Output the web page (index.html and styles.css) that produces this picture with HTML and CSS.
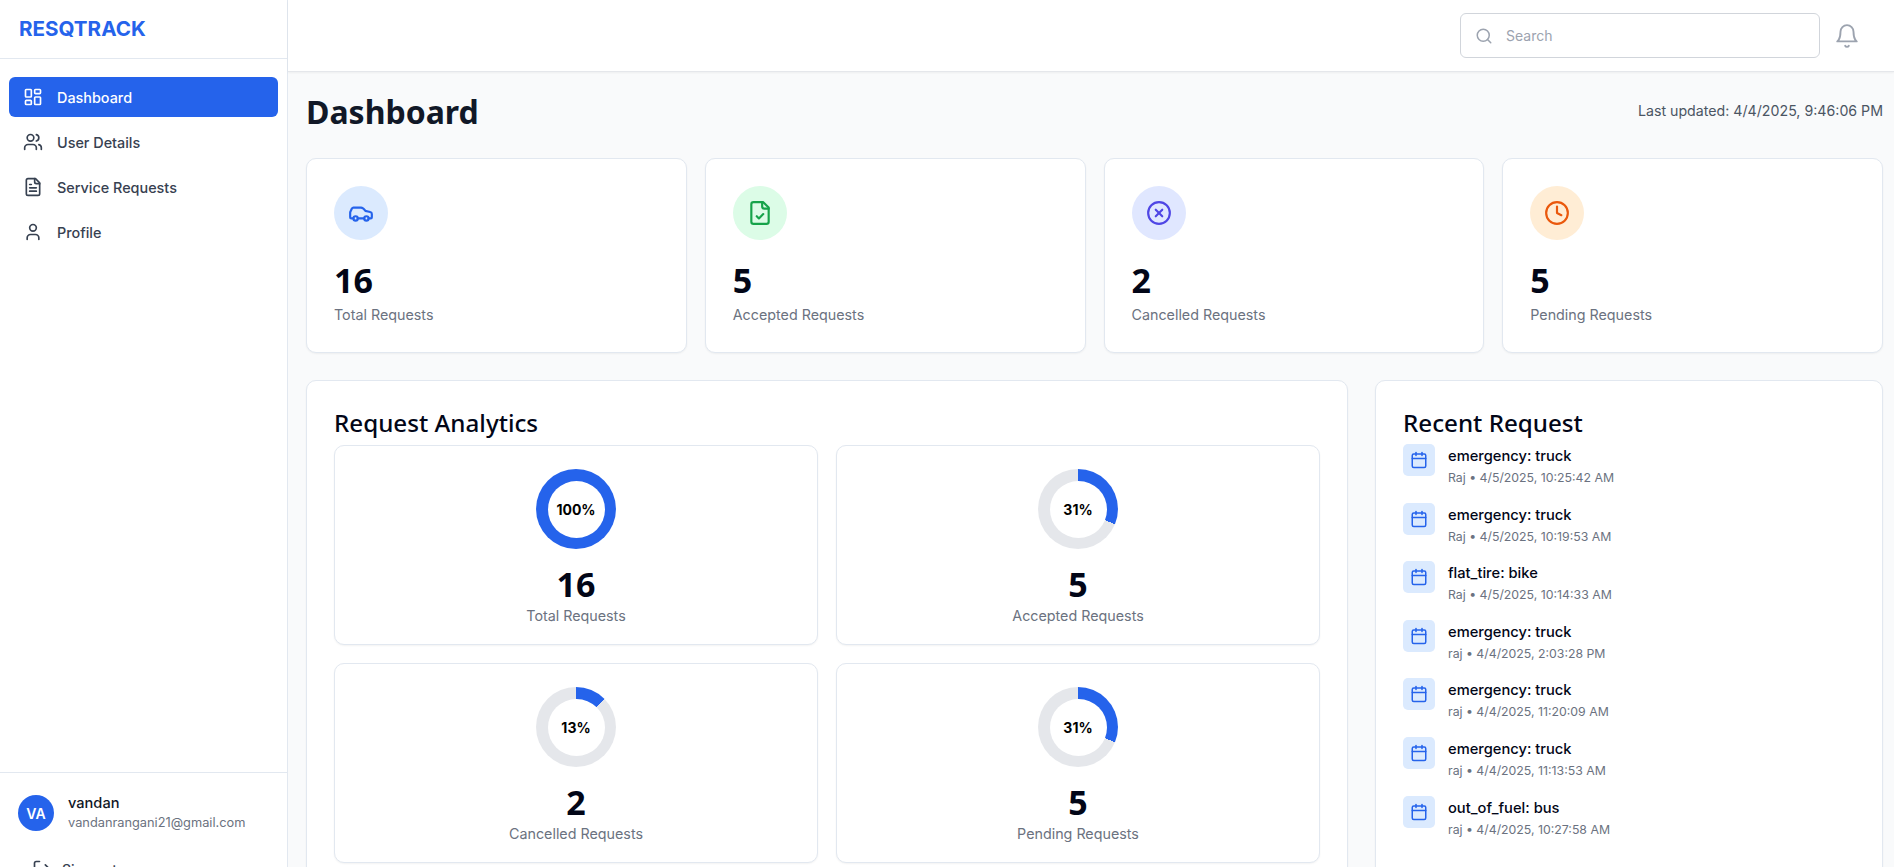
FILE: index.html
```html
<!DOCTYPE html>
<html lang="en">
<head>
    <meta charset="UTF-8">
    <meta name="viewport" content="width=device-width, initial-scale=1.0">
    <title>ResQTrack Dashboard</title>
    <link rel="stylesheet" href="styles.css">
</head>
<body>
    <!-- Icon set -->
    <svg class="icon-defs" aria-hidden="true">
        <symbol id="i-dashboard" viewBox="0 0 24 24"><rect x="3" y="3" width="7" height="9" rx="1"/><rect x="14" y="3" width="7" height="5" rx="1"/><rect x="14" y="12" width="7" height="9" rx="1"/><rect x="3" y="16" width="7" height="5" rx="1"/></symbol>
        <symbol id="i-users" viewBox="0 0 24 24"><path d="M16 21v-2a4 4 0 0 0-4-4H6a4 4 0 0 0-4 4v2"/><circle cx="9" cy="7" r="4"/><path d="M22 21v-2a4 4 0 0 0-3-3.87"/><path d="M16 3.13a4 4 0 0 1 0 7.75"/></symbol>
        <symbol id="i-file" viewBox="0 0 24 24"><path d="M15 2H6a2 2 0 0 0-2 2v16a2 2 0 0 0 2 2h12a2 2 0 0 0 2-2V7Z"/><path d="M14 2v4a2 2 0 0 0 2 2h4"/><path d="M10 9H8"/><path d="M16 13H8"/><path d="M16 17H8"/></symbol>
        <symbol id="i-user" viewBox="0 0 24 24"><path d="M19 21v-2a4 4 0 0 0-4-4H9a4 4 0 0 0-4 4v2"/><circle cx="12" cy="7" r="4"/></symbol>
        <symbol id="i-logout" viewBox="0 0 24 24"><path d="M9 21H5a2 2 0 0 1-2-2V5a2 2 0 0 1 2-2h4"/><path d="M16 17l5-5-5-5"/><path d="M21 12H9"/></symbol>
        <symbol id="i-search" viewBox="0 0 24 24"><circle cx="11" cy="11" r="8"/><path d="m21 21-4.3-4.3"/></symbol>
        <symbol id="i-bell" viewBox="0 0 24 24"><path d="M6 8a6 6 0 0 1 12 0c0 7 3 9 3 9H3s3-2 3-9"/><path d="M10.3 21a1.94 1.94 0 0 0 3.4 0"/></symbol>
        <symbol id="i-car" viewBox="0 0 24 24"><path d="M19 17h2c.6 0 1-.4 1-1v-3c0-.9-.7-1.7-1.5-1.9C18.7 10.6 16 10 16 10s-1.3-1.4-2.2-2.3c-.5-.4-1.1-.7-1.8-.7H5c-.6 0-1.1.4-1.4.9l-1.4 2.9A3.7 3.7 0 0 0 2 12v4c0 .6.4 1 1 1h2"/><circle cx="7" cy="17" r="2"/><path d="M9 17h6"/><circle cx="17" cy="17" r="2"/></symbol>
        <symbol id="i-filecheck" viewBox="0 0 24 24"><path d="M15 2H6a2 2 0 0 0-2 2v16a2 2 0 0 0 2 2h12a2 2 0 0 0 2-2V7Z"/><path d="M14 2v4a2 2 0 0 0 2 2h4"/><path d="m9 15 2 2 4-4"/></symbol>
        <symbol id="i-x" viewBox="0 0 24 24"><circle cx="12" cy="12" r="10"/><path d="m15 9-6 6"/><path d="m9 9 6 6"/></symbol>
        <symbol id="i-clock" viewBox="0 0 24 24"><circle cx="12" cy="12" r="10"/><path d="M12 6v6l4 2"/></symbol>
        <symbol id="i-calendar" viewBox="0 0 24 24"><path d="M8 2v4"/><path d="M16 2v4"/><rect x="3" y="4" width="18" height="18" rx="2"/><path d="M3 10h18"/></symbol>
    </svg>

    <div class="app">
        <aside class="sidebar">
            <div class="logo">RESQTRACK</div>
            <nav class="nav">
                <a class="nav-item active"><svg class="icon"><use href="#i-dashboard"/></svg>Dashboard</a>
                <a class="nav-item"><svg class="icon"><use href="#i-users"/></svg>User Details</a>
                <a class="nav-item"><svg class="icon"><use href="#i-file"/></svg>Service Requests</a>
                <a class="nav-item"><svg class="icon"><use href="#i-user"/></svg>Profile</a>
            </nav>
            <div class="side-footer">
                <div class="user-row">
                    <div class="avatar">VA</div>
                    <div>
                        <div class="user-name">vandan</div>
                        <div class="user-mail">vandanrangani21@gmail.com</div>
                    </div>
                </div>
                <a class="sign-out"><svg class="icon"><use href="#i-logout"/></svg>Sign out</a>
            </div>
        </aside>

        <div class="page">
            <header class="topbar">
                <div class="search">
                    <svg class="icon search-icon"><use href="#i-search"/></svg>
                    <span>Search</span>
                </div>
                <svg class="icon bell"><use href="#i-bell"/></svg>
            </header>

            <main class="content">
                <div class="title-row">
                    <h1>Dashboard</h1>
                    <span class="updated">Last updated: 4/4/2025, 9:46:06 PM</span>
                </div>

                <section class="stats">
                    <div class="card stat">
                        <div class="stat-icon blue"><svg class="icon"><use href="#i-car"/></svg></div>
                        <div class="num">16</div>
                        <div class="label">Total Requests</div>
                    </div>
                    <div class="card stat">
                        <div class="stat-icon green"><svg class="icon"><use href="#i-filecheck"/></svg></div>
                        <div class="num">5</div>
                        <div class="label">Accepted Requests</div>
                    </div>
                    <div class="card stat">
                        <div class="stat-icon indigo"><svg class="icon"><use href="#i-x"/></svg></div>
                        <div class="num">2</div>
                        <div class="label">Cancelled Requests</div>
                    </div>
                    <div class="card stat">
                        <div class="stat-icon orange"><svg class="icon"><use href="#i-clock"/></svg></div>
                        <div class="num">5</div>
                        <div class="label">Pending Requests</div>
                    </div>
                </section>

                <section class="lower">
                    <div class="card panel">
                        <h2>Request Analytics</h2>
                        <div class="donut-grid">
                            <div class="card donut-card">
                                <div class="donut" style="--pct: 100%"><span>100%</span></div>
                                <div class="num">16</div>
                                <div class="label">Total Requests</div>
                            </div>
                            <div class="card donut-card">
                                <div class="donut" style="--pct: 31.25%"><span>31%</span></div>
                                <div class="num">5</div>
                                <div class="label">Accepted Requests</div>
                            </div>
                            <div class="card donut-card">
                                <div class="donut" style="--pct: 12.5%"><span>13%</span></div>
                                <div class="num">2</div>
                                <div class="label">Cancelled Requests</div>
                            </div>
                            <div class="card donut-card">
                                <div class="donut" style="--pct: 31.25%"><span>31%</span></div>
                                <div class="num">5</div>
                                <div class="label">Pending Requests</div>
                            </div>
                        </div>
                    </div>

                    <div class="card panel">
                        <h2 class="recent-title">Recent Request</h2>
                        <ul class="recent">
                            <li><div class="cal"><svg class="icon"><use href="#i-calendar"/></svg></div><div><div class="r-title">emergency: truck</div><div class="r-sub">Raj • 4/5/2025, 10:25:42 AM</div></div></li>
                            <li><div class="cal"><svg class="icon"><use href="#i-calendar"/></svg></div><div><div class="r-title">emergency: truck</div><div class="r-sub">Raj • 4/5/2025, 10:19:53 AM</div></div></li>
                            <li><div class="cal"><svg class="icon"><use href="#i-calendar"/></svg></div><div><div class="r-title">flat_tire: bike</div><div class="r-sub">Raj • 4/5/2025, 10:14:33 AM</div></div></li>
                            <li><div class="cal"><svg class="icon"><use href="#i-calendar"/></svg></div><div><div class="r-title">emergency: truck</div><div class="r-sub">raj • 4/4/2025, 2:03:28 PM</div></div></li>
                            <li><div class="cal"><svg class="icon"><use href="#i-calendar"/></svg></div><div><div class="r-title">emergency: truck</div><div class="r-sub">raj • 4/4/2025, 11:20:09 AM</div></div></li>
                            <li><div class="cal"><svg class="icon"><use href="#i-calendar"/></svg></div><div><div class="r-title">emergency: truck</div><div class="r-sub">raj • 4/4/2025, 11:13:53 AM</div></div></li>
                            <li><div class="cal"><svg class="icon"><use href="#i-calendar"/></svg></div><div><div class="r-title">out_of_fuel: bus</div><div class="r-sub">raj • 4/4/2025, 10:27:58 AM</div></div></li>
                        </ul>
                    </div>
                </section>
            </main>
        </div>
    </div>
</body>
</html>
```

FILE: styles.css
```css
/* Reset */
* {
    margin: 0;
    padding: 0;
    box-sizing: border-box;
}

body {
    font-family: 'Inter', 'Noto Sans', sans-serif;
    background-color: #f9fafb;
    color: #111827;
    height: 100vh;
    overflow: hidden;
}

.icon-defs {
    display: none;
}

.icon {
    width: 20px;
    height: 20px;
    fill: none;
    stroke: currentColor;
    stroke-width: 2;
    stroke-linecap: round;
    stroke-linejoin: round;
    flex-shrink: 0;
}

.app {
    display: flex;
    height: 100vh;
    overflow: hidden;
}

/* Sidebar */
.sidebar {
    width: 288px;
    flex-shrink: 0;
    height: 900px;
    display: flex;
    flex-direction: column;
    background-color: #fff;
    border-right: 1px solid #e2e8f0;
}

.logo {
    height: 59px;
    padding: 0 19px 2px;
    display: flex;
    align-items: center;
    font-size: 20.6px;
    font-weight: 700;
    color: #2563eb;
    border-bottom: 1px solid #e2e8f0;
}

.nav {
    flex: 1;
    padding: 18px 9px;
    display: flex;
    flex-direction: column;
    gap: 5px;
}

.nav-item {
    height: 40px;
    padding: 0 14px;
    display: flex;
    align-items: center;
    gap: 14px;
    border-radius: 6px;
    font-size: 14.4px;
    font-weight: 500;
    color: #374151;
}

.nav-item.active {
    background-color: #2563eb;
    color: #fff;
}

.side-footer {
    height: 128px;
    padding: 20px 18px;
    border-top: 1px solid #e2e8f0;
}

.user-row {
    display: flex;
    align-items: center;
    gap: 14px;
}

.avatar {
    width: 36px;
    height: 36px;
    border-radius: 50%;
    background-color: #2563eb;
    color: #fff;
    font-size: 14px;
    font-weight: 600;
    display: flex;
    align-items: center;
    justify-content: center;
}

.user-name {
    font-size: 14.6px;
    font-weight: 500;
    color: #111827;
    line-height: 20px;
}

.user-mail {
    font-size: 12.8px;
    color: #6b7280;
    line-height: 20px;
}

.sign-out {
    margin-top: 26px;
    padding-left: 14px;
    display: flex;
    align-items: center;
    gap: 10px;
    font-size: 14px;
    font-weight: 500;
    color: #374151;
}

/* Top bar */
.page {
    flex: 1;
    min-width: 0;
    height: 900px;
    display: flex;
    flex-direction: column;
}

.topbar {
    height: 72px;
    flex-shrink: 0;
    padding-right: 34px;
    display: flex;
    align-items: center;
    justify-content: flex-end;
    gap: 14px;
    background-color: #fff;
    border-bottom: 1px solid #e5e7eb;
    box-shadow: 0 1px 2px rgba(0, 0, 0, 0.05);
}

.search {
    width: 360px;
    height: 45px;
    padding: 0 14px;
    display: flex;
    align-items: center;
    gap: 13px;
    background-color: #fff;
    border: 1px solid #d1d5db;
    border-radius: 6px;
    font-size: 14px;
    color: #9ca3af;
}

.search-icon {
    width: 18px;
    height: 18px;
}

.bell {
    width: 26px;
    height: 26px;
    color: #9ca3af;
    stroke-width: 1.75;
}

/* Main content */
.content {
    flex: 1;
    display: flex;
    flex-direction: column;
    padding: 20px 11px 0 18px;
}

.title-row {
    display: flex;
    align-items: center;
    justify-content: space-between;
    margin-bottom: 26px;
}

h1 {
    font-family: 'Noto Sans', sans-serif;
    font-size: 32px;
    line-height: 40px;
    font-weight: 700;
    color: #111827;
}

.updated {
    font-size: 14.2px;
    color: #4b5563;
    margin-top: -4px;
}

.card {
    background-color: #fff;
    border: 1px solid #e2e8f0;
    border-radius: 10px;
    box-shadow: 0 1px 2px rgba(0, 0, 0, 0.05);
}

.stats {
    display: grid;
    grid-template-columns: repeat(4, 1fr);
    gap: 18px;
    margin-bottom: 27px;
}

.stat {
    padding: 27px;
}

.stat-icon {
    width: 54px;
    height: 54px;
    border-radius: 50%;
    display: flex;
    align-items: center;
    justify-content: center;
    margin-bottom: 20px;
}

.stat-icon .icon {
    width: 26px;
    height: 26px;
}

.blue { background-color: #dbeafe; color: #2563eb; }
.green { background-color: #dcfce7; color: #16a34a; }
.indigo { background-color: #e0e7ff; color: #4f46e5; }
.orange { background-color: #ffedd5; color: #ea580c; }

.num {
    font-family: 'Noto Sans', sans-serif;
    font-size: 34px;
    line-height: 40px;
    font-weight: 700;
    color: #020617;
}

.stat .num {
    margin-bottom: 5px;
}

.label {
    font-size: 14.3px;
    line-height: 20px;
    color: #6b7280;
}

.lower {
    flex: 1;
    display: grid;
    grid-template-columns: minmax(0, 1fr) 508px;
    gap: 27px;
}

.panel {
    padding: 27px;
}

h2 {
    font-family: 'Noto Sans', sans-serif;
    font-size: 24.2px;
    line-height: 30px;
    font-weight: 500;
    color: #020617;
    margin-bottom: 7px;
}

.recent-title {
    margin-bottom: 6px;
}

.donut-grid {
    display: grid;
    grid-template-columns: 1fr 1fr;
    gap: 18px;
}

.donut-card {
    padding: 23px 24px 18px;
    display: flex;
    flex-direction: column;
    align-items: center;
}

.donut-card .num {
    line-height: 38px;
    margin-bottom: 3px;
}

.donut {
    --pct: 0%;
    width: 80px;
    height: 80px;
    border-radius: 50%;
    background: conic-gradient(#2563eb var(--pct), #e5e7eb 0);
    display: flex;
    align-items: center;
    justify-content: center;
    margin-bottom: 16px;
}

.donut span {
    width: 57px;
    height: 57px;
    border-radius: 50%;
    background-color: #fff;
    display: flex;
    align-items: center;
    justify-content: center;
    font-size: 14px;
    font-weight: 700;
    color: #000;
}

.recent {
    list-style: none;
    display: flex;
    flex-direction: column;
    gap: 15.2px;
}

.recent li {
    display: flex;
    gap: 13px;
}

.cal {
    width: 32px;
    height: 32px;
    border-radius: 5px;
    background-color: #dbeafe;
    color: #2563eb;
    display: flex;
    align-items: center;
    justify-content: center;
}

.cal .icon {
    width: 18px;
    height: 18px;
}

.r-title {
    font-size: 14.7px;
    line-height: 25px;
    font-weight: 500;
    color: #020617;
}

.r-sub {
    font-size: 12.3px;
    line-height: 18.4px;
    color: #6b7280;
}
```
